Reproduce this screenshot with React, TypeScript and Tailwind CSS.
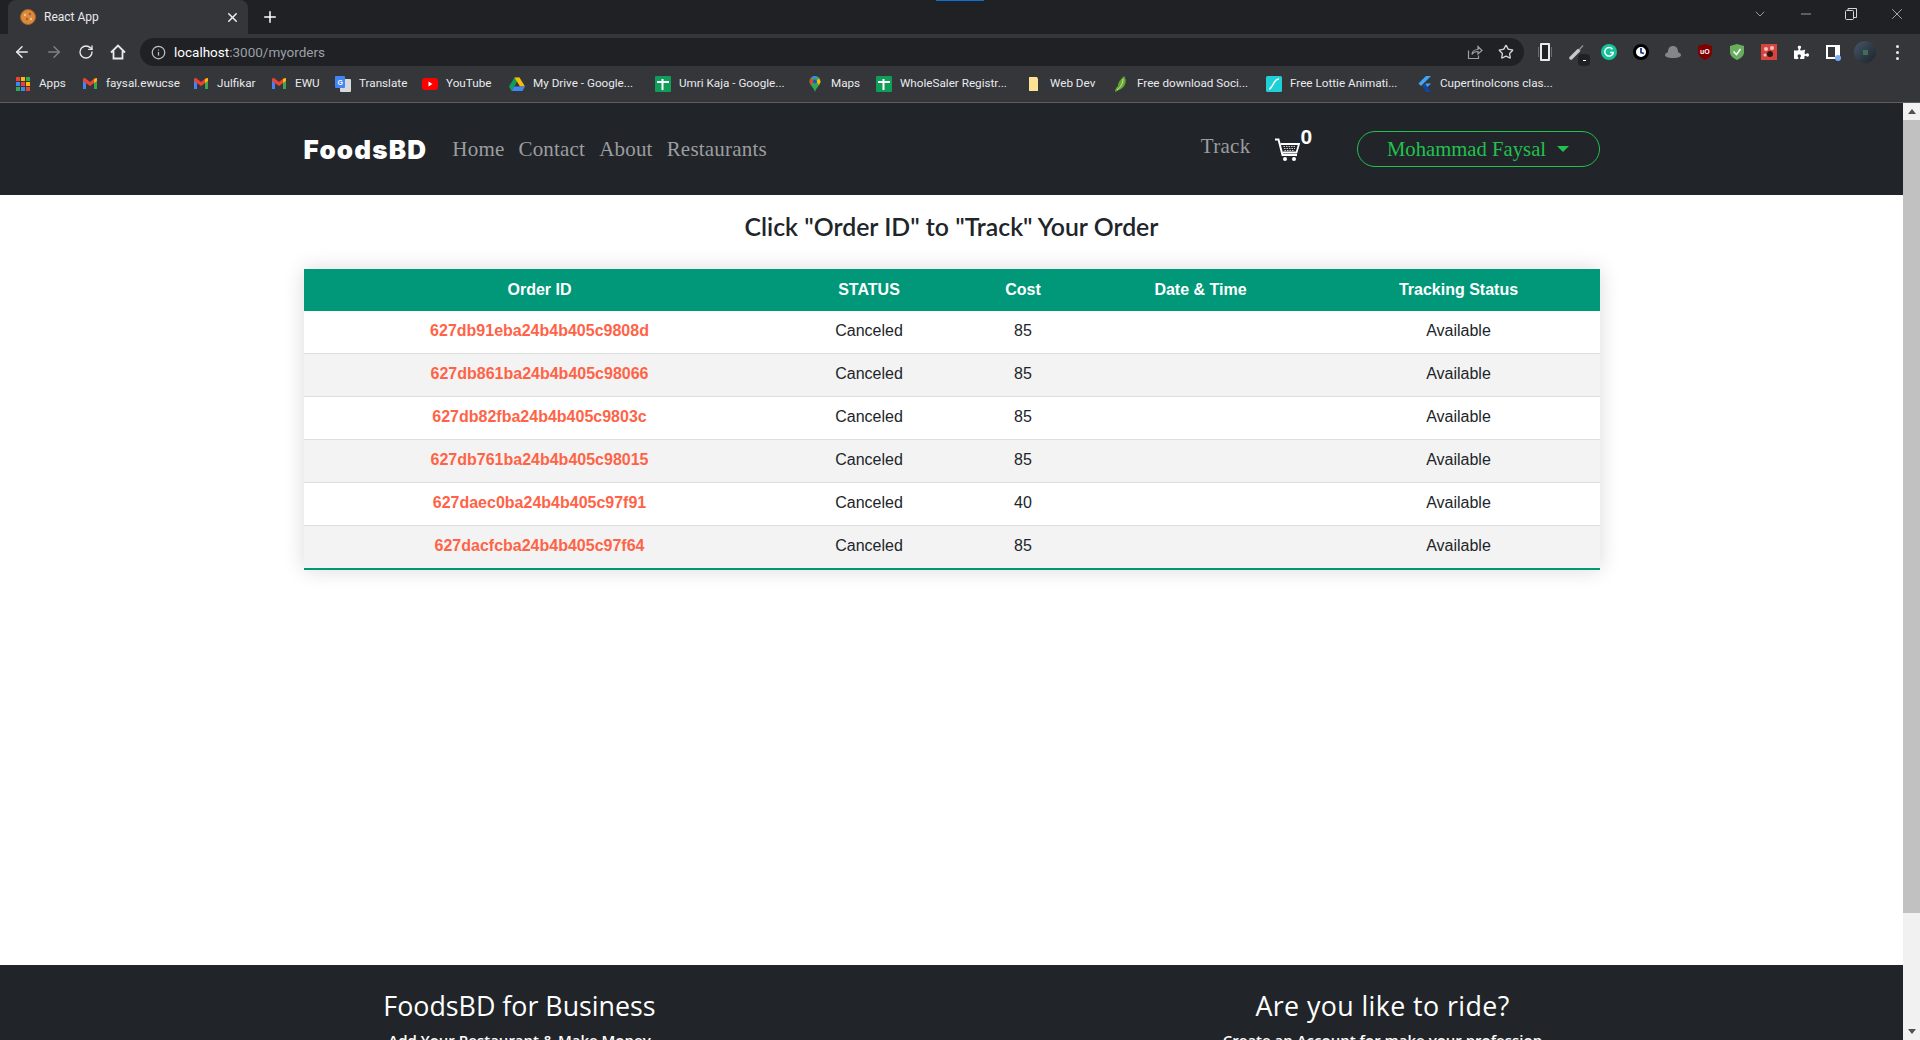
import React from 'react';
import { ArrowLeft, ArrowRight, ChevronDown, Info, Minus, Plus, RotateCw, Star, X } from 'lucide-react';
import { FaPuzzlePiece } from 'react-icons/fa';

const GmailIcon = () => (
  <svg viewBox="0 0 16 16" className="h-4 w-4">
    <path d="M1 4v9h3V7z" fill="#4285f4" />
    <path d="M12 7v6h3V4z" fill="#34a853" />
    <path d="M1 2.500V5l7 5 7-5V2.500L13 2 8 6 3 2z" fill="#ea4335" />
    <path d="M12 3l3-1v3l-3 2z" fill="#fbbc04" />
  </svg>
);

const SheetsIcon = () => (
  <svg viewBox="0 0 16 16" className="h-4 w-4">
    <rect width="16" height="16" rx="1" fill="#0f9d58" />
    <path d="M2 6h12M7.500 3v11" stroke="#fff" strokeWidth="2" />
  </svg>
);

const AppsIcon = () => (
  <svg viewBox="0 0 16 16" className="h-4 w-4">
    {[1, 6, 11].map((y, r) =>
      [1, 6, 11].map((x, c) => (
        <rect
          key={`${r}-${c}`}
          x={x}
          y={y}
          width="4"
          height="4"
          fill={['#ea4335', '#fbbc04', '#34a853', '#4285f4', '#ea4335', '#fbbc04', '#34a853', '#4285f4', '#ea4335'][r * 3 + c]}
        />
      )),
    )}
  </svg>
);

const TranslateIcon = () => (
  <svg viewBox="0 0 16 16" className="h-4 w-4">
    <rect x="5" y="3" width="11" height="13" rx="1" fill="#d7d9dc" />
    <rect x="0" y="0" width="10" height="12" rx="1" fill="#4285f4" />
    <text x="2.500" y="8.500" fontSize="7" fontWeight="700" fill="#fff" fontFamily="Liberation Sans, sans-serif">G</text>
  </svg>
);

const YoutubeIcon = () => (
  <svg viewBox="0 0 16 16" className="h-4 w-4">
    <rect y="2" width="16" height="12" rx="3" fill="#f00" />
    <path d="M6.500 5.500v5l4-2.500z" fill="#fff" />
  </svg>
);

const DriveIcon = () => (
  <svg viewBox="0 0 16 16" className="h-4 w-4">
    <path d="M5.500 1.500h5L5 11l-2.500 4L0 10.500z" fill="#0f9d58" />
    <path d="M5.500 1.500h5l5.500 9h-5z" fill="#fbbc04" />
    <path d="M5 10.500h11L13.500 15h-11z" fill="#4285f4" />
  </svg>
);

const MapsIcon = () => (
  <svg viewBox="0 0 16 16" className="h-4 w-4">
    <path d="M8 0a5.500 5.500 0 0 1 5.500 5.500C13.500 9 9.500 11 8 16 6.500 11 2.500 9 2.500 5.500A5.500 5.500 0 0 1 8 0z" fill="#34a853" />
    <path d="M4 2l8 .5A5.500 5.500 0 0 0 8 0 5.500 5.500 0 0 0 4 2z" fill="#4285f4" />
    <path d="M2.500 5.500 4 2l3 3-3 4z" fill="#ea4335" />
    <path d="M13.500 5.500 12 2.500 9 5l3 4z" fill="#fbbc04" />
    <circle cx="8" cy="5.500" r="2" fill="#1a56c4" />
  </svg>
);

const FolderIcon = () => (
  <svg viewBox="0 0 16 16" className="h-4 w-4">
    <path d="M3 1h8l1 2v12H3z" fill="#fde293" />
  </svg>
);

const LeafIcon = () => (
  <svg viewBox="0 0 16 16" className="h-4 w-4">
    <path d="M11 0c3 4 2 10-3 13l-6 3c0-3 1-4 3-6 0-4 3-7 6-10z" fill="#63a82e" />
    <path d="M10 3c0 4-2 8-6 11" stroke="#cfe8a8" strokeWidth="1" fill="none" />
  </svg>
);

const LottieIcon = () => (
  <svg viewBox="0 0 16 16" className="h-4 w-4">
    <rect width="16" height="16" rx="1.500" fill="#1fd1d6" />
    <path d="M3 13c4 0 4-10 10-10" stroke="#fff" strokeWidth="1.500" fill="none" />
  </svg>
);

const FlutterIcon = () => (
  <svg viewBox="0 0 16 16" className="h-4 w-4">
    <path d="M10 0h5L5 10 2.500 7.500z" fill="#42a5f5" />
    <path d="M10 7.500h5L9.500 13 7 10.500z" fill="#42a5f5" />
    <path d="M7 10.500 9.500 8l5.500 8h-5z" fill="#0d47a1" />
  </svg>
);

const bookmarks = [
  { label: 'Apps', icon: AppsIcon, width: 'w-[67px]' },
  { label: 'faysal.ewucse', icon: GmailIcon, width: 'w-[111px]' },
  { label: 'Julfikar', icon: GmailIcon, width: 'w-[78px]' },
  { label: 'EWU', icon: GmailIcon, width: 'w-[64px]' },
  { label: 'Translate', icon: TranslateIcon, width: 'w-[87px]' },
  { label: 'YouTube', icon: YoutubeIcon, width: 'w-[87px]' },
  { label: 'My Drive - Google...', icon: DriveIcon, width: 'w-[146px]' },
  { label: 'Umri Kaja - Google...', icon: SheetsIcon, width: 'w-[152px]' },
  { label: 'Maps', icon: MapsIcon, width: 'w-[69px]' },
  { label: 'WholeSaler Registr...', icon: SheetsIcon, width: 'w-[150px]' },
  { label: 'Web Dev', icon: FolderIcon, width: 'w-[87px]' },
  { label: 'Free download Soci...', icon: LeafIcon, width: 'w-[153px]' },
  { label: 'Free Lottie Animati...', icon: LottieIcon, width: 'w-[150px]' },
  { label: 'CupertinoIcons clas...', icon: FlutterIcon, width: 'w-[140px]' },
];

const orders = [
  { id: '627db91eba24b4b405c9808d', cost: 85 },
  { id: '627db861ba24b4b405c98066', cost: 85 },
  { id: '627db82fba24b4b405c9803c', cost: 85 },
  { id: '627db761ba24b4b405c98015', cost: 85 },
  { id: '627daec0ba24b4b405c97f91', cost: 40 },
  { id: '627dacfcba24b4b405c97f64', cost: 85 },
];

function Extensions() {
  return (
    <div className="ml-[5px] flex items-center">
      <div className="flex w-[32px] justify-center">
        <div className="flex items-center gap-[1px]">
          <div className="h-[10px] w-[1px] bg-[#6b6c70]" />
          <div className="h-[18px] w-[10px] rounded-[1px] border-2 border-[#e8eaed] bg-[#202124]" />
          <div className="h-[10px] w-[1px] bg-[#6b6c70]" />
        </div>
      </div>
      <div className="relative flex h-[28px] w-[32px] items-center justify-center">
        <svg viewBox="0 0 16 16" className="h-4 w-4" fill="none">
          <path d="M2 14 9.500 6.500" stroke="#c8c9cb" strokeWidth="3.500" strokeLinecap="round" />
          <path d="M10 6 14 1.500" stroke="#8a8b8e" strokeWidth="1.500" />
        </svg>
        <div className="absolute left-[17px] top-[16px] flex h-[12px] w-[12px] items-center justify-center rounded-sm bg-[#202124]">
          <div className="h-[1px] w-[3px] bg-white" />
        </div>
      </div>
      <div className="flex w-[32px] justify-center">
        <svg viewBox="0 0 16 16" className="h-4 w-4">
          <circle cx="8" cy="8" r="8" fill="#15c39a" />
          <path d="M11.500 5.200a4.300 4.300 0 1 0 .8 3.300H9" stroke="#fff" strokeWidth="1.500" fill="none" />
        </svg>
      </div>
      <div className="flex w-[32px] justify-center">
        <svg viewBox="0 0 16 16" className="h-4 w-4">
          <circle cx="8" cy="8" r="6.500" fill="#fff" stroke="#000" strokeWidth="3" />
          <path d="M8 4v4.500l3 1" stroke="#1a3a8a" strokeWidth="1.800" fill="none" />
        </svg>
      </div>
      <div className="flex w-[32px] justify-center">
        <svg viewBox="0 0 16 16" className="h-4 w-4">
          <path d="M0 11c0-2 2-2 3-3 0-4 2-6 5-6s5 2 5 6c1 1 3 1 3 3s-3 3-8 3-8-1-8-3z" fill="#85868a" />
        </svg>
      </div>
      <div className="flex w-[32px] justify-center">
        <div className="relative h-4 w-4">
          <svg viewBox="0 0 16 16" className="h-4 w-4">
            <path d="M8 0l7 2v6c0 4-3 6-7 8-4-2-7-4-7-8V2z" fill="#800000" />
          </svg>
          <span className="absolute left-[3px] top-[4px] font-['Liberation_Sans',sans-serif] text-[7px] font-bold leading-none text-white">uO</span>
        </div>
      </div>
      <div className="flex w-[32px] justify-center">
        <svg viewBox="0 0 16 16" className="h-4 w-4">
          <path d="M8 0l7 2v6c0 4-3 6-7 8-4-2-7-4-7-8V2z" fill="#68ae5d" />
          <path d="M4.500 7.500l3 3 4-5.500" stroke="#fff" strokeWidth="1.500" fill="none" />
        </svg>
      </div>
      <div className="flex w-[32px] justify-center">
        <svg viewBox="0 0 16 16" className="h-4 w-4">
          <rect width="16" height="16" fill="#d6453d" />
          <circle cx="5" cy="5" r="2" fill="#f3c3bd" />
          <circle cx="11" cy="4" r="2" fill="#f3c3bd" />
          <circle cx="4" cy="11" r="1.500" fill="#f3c3bd" />
          <circle cx="9" cy="10" r="3" fill="#2c1616" />
        </svg>
      </div>
      <div className="flex w-[32px] justify-center">
        <FaPuzzlePiece className="h-[15px] w-[15px] text-white" />
      </div>
      <div className="flex w-[32px] justify-center">
        <div className="relative h-[14px] w-[14px] bg-white">
          <div className="absolute left-[2px] top-[2px] h-[10px] w-[7px] bg-[#35363a]" />
          <div className="absolute -bottom-[2px] -right-[1px] h-[6px] w-[6px] rounded-full bg-[#7baaf7]" />
        </div>
      </div>
      <div className="flex w-[32px] justify-center">
        <div className="flex h-[22px] w-[22px] items-center justify-center rounded-full bg-gradient-to-br from-[#46586a] to-[#1d2329]">
          <div className="h-[5px] w-[5px] bg-[#3f6f5a]" />
        </div>
      </div>
      <div className="flex w-[32px] flex-col items-center gap-[3px]">
        <div className="h-[3px] w-[3px] rounded-full bg-[#e8eaed]" />
        <div className="h-[3px] w-[3px] rounded-full bg-[#e8eaed]" />
        <div className="h-[3px] w-[3px] rounded-full bg-[#e8eaed]" />
      </div>
    </div>
  );
}

function BrowserChrome() {
  return (
    <div className="h-[103px] shrink-0 bg-[#202124] font-['Roboto',sans-serif] text-white">
      {/* tab strip */}
      <div className="relative flex h-[34px] items-end pl-2">
        <div className="absolute left-[936px] top-0 h-px w-[48px] bg-[#0b6fd6]" />
        <div className="flex h-[34px] w-[240px] items-center rounded-t-lg bg-[#35363a] pl-3 pr-2">
          <svg viewBox="0 0 16 16" className="h-4 w-4">
            <circle cx="8" cy="8" r="7.500" fill="#d98a3d" stroke="#a8642a" />
            <circle cx="5" cy="6" r="1.200" fill="#f3c77e" />
            <circle cx="10" cy="5" r="1.200" fill="#b5562a" />
            <circle cx="7" cy="10" r="1.200" fill="#b5562a" />
            <circle cx="11" cy="10" r="1.200" fill="#f3c77e" />
          </svg>
          <span className="ml-2 flex-1 text-xs text-[#e8eaed]">React App</span>
          <X className="h-[15px] w-[15px] text-[#e8eaed]" strokeWidth={2.5} />
        </div>
        <Plus className="ml-[13px] mb-[8px] h-[18px] w-[18px] text-white" strokeWidth={2} />
        <div className="ml-auto flex h-[28px] items-center self-start text-[#d5d6d8]">
          <ChevronDown className="mr-[30px] h-4 w-4" strokeWidth={1} />
          <Minus className="mr-[31px] h-4 w-4" strokeWidth={1} />
          <svg viewBox="0 0 12 12" className="mr-[31px] h-3 w-3" fill="none" stroke="currentColor">
            <rect x="0.500" y="2.500" width="8" height="9" rx="1" />
            <path d="M3 2.500V.500h8.500v9H9" />
          </svg>
          <X className="mr-[14px] h-[18px] w-[18px]" strokeWidth={1} />
        </div>
      </div>

      {/* address bar */}
      <div className="flex h-[32px] items-center bg-[#35363a] pt-[4px] text-[#e8eaed]">
        <ArrowLeft className="ml-[13px] h-[18px] w-[18px]" strokeWidth={2} />
        <ArrowRight className="ml-[14px] h-[18px] w-[18px] text-[#808184]" strokeWidth={2} />
        <RotateCw className="ml-[15px] h-[16px] w-[16px]" strokeWidth={2} />
        <svg viewBox="0 0 18 18" className="ml-[15px] h-[18px] w-[18px]" fill="none" stroke="currentColor" strokeWidth="1.800">
          <path d="M2 9.500 9 2.500l7 7M4.500 8v7.500h9V8" />
        </svg>
        <div className="ml-[13px] flex h-[28px] w-[1384px] items-center rounded-full bg-[#202124]">
          <Info className="ml-[11px] h-[15px] w-[15px] text-[#bdc1c6]" strokeWidth={2} />
          <span className="ml-[8px] text-[13.5px] text-white">
            localhost<span className="text-[#9aa0a6]">:3000/myorders</span>
          </span>
          <svg viewBox="0 0 16 16" className="ml-auto h-4 w-4" fill="none" stroke="#9aa0a6" strokeWidth="1.200">
            <path d="M1.500 6.500v8h10V11.500" />
            <path d="M5 10.500c0-3 2.500-5 6-5V2.500l4 4-4 3.500V7.500c-2.500 0-5 1-6 3z" />
          </svg>
          <Star className="ml-[15px] mr-[10px] h-4 w-4 text-[#d5d6d8]" strokeWidth={2} />
        </div>
        <Extensions />
      </div>

      {/* bookmarks */}
      <div className="flex h-[37px] items-center border-b border-[#5c5e62] bg-[#35363a] pl-[15px]">
        {bookmarks.map((b) => (
          <div key={b.label} className={`flex items-center gap-[8px] ${b.width}`}>
            <b.icon />
            <span className="whitespace-nowrap text-[11.7px] text-[#e8eaed]">{b.label}</span>
          </div>
        ))}
      </div>
    </div>
  );
}

function Navbar() {
  return (
    <nav className="h-[92px] shrink-0 bg-[#212529]">
      <div className="mx-auto flex h-full w-[1296px] items-center">
        <a className="mr-[25px] font-['Inter',sans-serif] text-[26px] font-black tracking-[1.2px] text-white">FoodsBD</a>
        <div className="mt-[2px] flex gap-[14px] font-['Liberation_Serif',serif] text-[21px] tracking-[0.2px] text-[#9c9d9f]">
          <a>Home</a>
          <a>Contact</a>
          <a>About</a>
          <a>Restaurants</a>
        </div>
        <a className="ml-auto -mt-[4px] font-['Liberation_Serif',serif] text-[21px] tracking-[0.3px] text-[#9c9d9f]">Track</a>
        <div className="relative ml-[24px] mr-[57px] h-[23px] w-[25px]">
          <svg viewBox="0 0 25 23" className="h-[23px] w-[25px]" fill="none">
            <path d="M0 1.500h3.500L7.500 17H22" stroke="#fff" strokeWidth="2" />
            <path d="M5.500 6H24l-2.500 8.500H8" stroke="#fff" strokeWidth="1.800" />
            <path d="M8.500 8.500h12M9 10.500h11M9.500 12.500h10" stroke="#c9cacb" strokeWidth="1" strokeDasharray="1.500 1" />
            <circle cx="10" cy="21" r="2" fill="#fff" />
            <circle cx="19" cy="21" r="2" fill="#fff" />
          </svg>
          <span className="absolute -top-[12px] left-[26px] font-['Liberation_Sans',sans-serif] text-[21px] font-bold leading-none text-white">0</span>
        </div>
        <button className="flex h-[36px] w-[243px] items-center justify-center rounded-full border-[1.5px] border-[#22c04f] pt-[2px] font-['Liberation_Serif',serif] text-[20.7px] text-[#22c04f]">
          Mohammad Faysal
          <span className="ml-[11px] mb-[2px] h-0 w-0 border-x-[6px] border-t-[6px] border-x-transparent border-t-[#22c04f]" />
        </button>
      </div>
    </nav>
  );
}

function OrdersTable() {
  return (
    <main className="flex-1 bg-white">
      <h2 className="pt-[16px] text-center font-['Lato',sans-serif] text-[24.8px] font-semibold leading-[32px] text-[#212529]">
        Click "Order ID" to "Track" Your Order
      </h2>
      <table className="mx-auto mt-[26px] w-[1296px] table-fixed border-separate border-spacing-0 font-['Liberation_Sans',sans-serif] text-base text-[#212529] shadow-[0_0_20px_rgba(0,0,0,0.15)]">
        <colgroup>
          <col className="w-[472px]" />
          <col className="w-[187px]" />
          <col className="w-[121px]" />
          <col className="w-[234px]" />
          <col className="w-[282px]" />
        </colgroup>
        <thead>
          <tr className="h-[42px] bg-[#009879] font-bold text-white">
            <th>Order ID</th>
            <th>STATUS</th>
            <th>Cost</th>
            <th>Date &amp; Time</th>
            <th>Tracking Status</th>
          </tr>
        </thead>
        <tbody>
          {orders.map((order, i) => {
            const last = i === orders.length - 1;
            const cell = last ? 'pb-[2px] border-b-2 border-[#009879]' : 'pb-[2px] border-b border-[#dddddd]';
            return (
              <tr key={order.id} className={`text-center ${last ? 'h-[44px]' : 'h-[43px]'} ${i % 2 === 1 ? 'bg-[#f3f3f3]' : 'bg-white'}`}>
                <td className={`font-bold text-[#ff6347] ${cell}`}>{order.id}</td>
                <td className={cell}>Canceled</td>
                <td className={cell}>{order.cost}</td>
                <td className={cell} />
                <td className={cell}>Available</td>
              </tr>
            );
          })}
        </tbody>
      </table>
    </main>
  );
}

function Footer() {
  return (
    <footer className="h-[75px] shrink-0 overflow-hidden bg-[#212529] font-['Open_Sans',sans-serif] text-white">
      <div className="mx-auto flex w-[1296px] pt-[23px]">
        <div className="ml-[8px] w-[416px] text-center">
          <h3 className="text-[26.8px] font-medium leading-[36px]">FoodsBD for Business</h3>
          <p className="mt-[4px] text-[15px] font-semibold leading-6">Add Your Restaurant &amp; Make Money</p>
        </div>
        <div className="ml-[447px] w-[416px] text-center">
          <h3 className="text-[26.8px] font-medium leading-[36px] tracking-[0.4px]">Are you like to ride?</h3>
          <p className="mt-[4px] text-[15px] font-semibold leading-6">Create an Account for make your profession</p>
        </div>
      </div>
    </footer>
  );
}

function Scrollbar() {
  return (
    <div className="flex w-[17px] shrink-0 flex-col items-center bg-[#f1f1f1]">
      <div className="flex h-[17px] items-center">
        <div className="h-0 w-0 border-x-[4px] border-b-[5px] border-x-transparent border-b-[#505050]" />
      </div>
      <div className="h-[793px] w-full bg-[#c1c1c1]" />
      <div className="mt-auto flex h-[17px] items-center">
        <div className="h-0 w-0 border-x-[4px] border-t-[5px] border-x-transparent border-t-[#505050]" />
      </div>
    </div>
  );
}

export default function App() {
  return (
    <div className="flex h-screen w-full flex-col overflow-hidden bg-white">
      <BrowserChrome />
      <div className="flex min-h-0 flex-1">
        <div className="flex min-w-0 flex-1 flex-col">
          <Navbar />
          <OrdersTable />
          <Footer />
        </div>
        <Scrollbar />
      </div>
    </div>
  );
}
